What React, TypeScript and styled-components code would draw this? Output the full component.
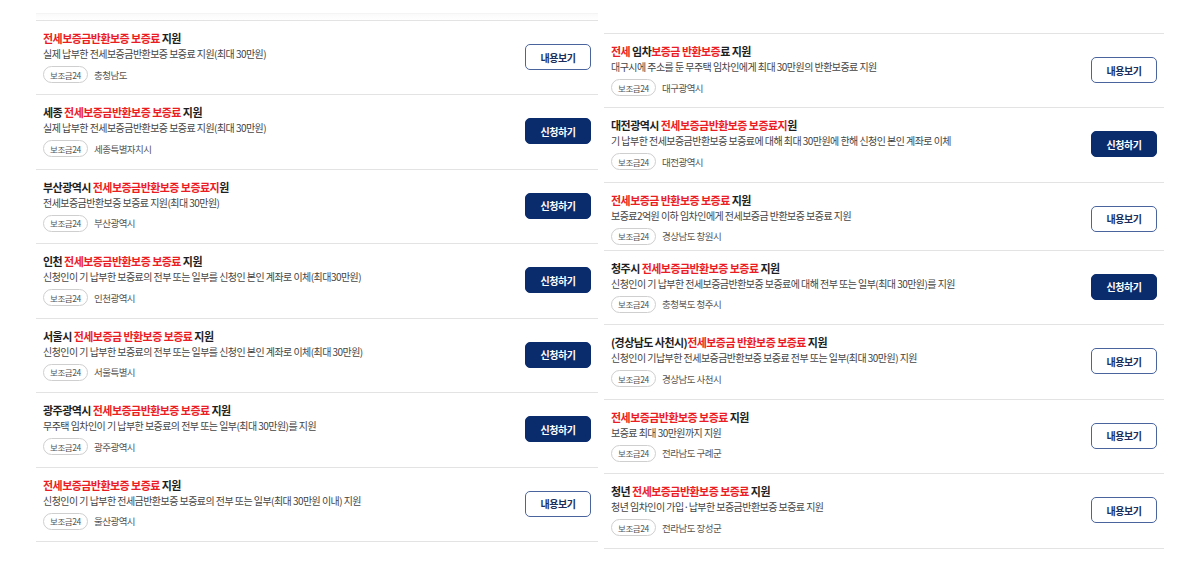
import React from "react";
import styled, { createGlobalStyle } from "styled-components";

const GlobalStyle = createGlobalStyle`
  html, body { margin: 0; padding: 0; background: #ffffff; }
  body { font-family: "Noto Sans CJK KR", "Noto Sans", sans-serif; color: #222; }
  * { box-sizing: border-box; }
`;

type Seg = { t: string; hl?: boolean };
type Item = {
  title: Seg[];
  desc: string;
  region: string;
  apply?: boolean;
  compact?: boolean;
};

const leftItems: Item[] = [
  { title: [{ t: "전세보증금반환보증 보증료", hl: true }, { t: " 지원" }], desc: "실제 납부한 전세보증금반환보증 보증료 지원(최대 30만원)", region: "충청남도" },
  { title: [{ t: "세종 " }, { t: "전세보증금반환보증 보증료", hl: true }, { t: " 지원" }], desc: "실제 납부한 전세보증금반환보증 보증료 지원(최대 30만원)", region: "세종특별자치시", apply: true },
  { title: [{ t: "부산광역시 " }, { t: "전세보증금반환보증 보증료지", hl: true }, { t: "원" }], desc: "전세보증금반환보증 보증료 지원(최대 30만원)", region: "부산광역시", apply: true },
  { title: [{ t: "인천 " }, { t: "전세보증금반환보증 보증료", hl: true }, { t: " 지원" }], desc: "신청인이 기 납부한 보증료의 전부 또는 일부를 신청인 본인 계좌로 이체(최대30만원)", region: "인천광역시", apply: true },
  { title: [{ t: "서울시 " }, { t: "전세보증금 반환보증 보증료", hl: true }, { t: " 지원" }], desc: "신청인이 기 납부한 보증료의 전부 또는 일부를 신청인 본인 계좌로 이체(최대 30만원)", region: "서울특별시", apply: true },
  { title: [{ t: "광주광역시 " }, { t: "전세보증금반환보증 보증료", hl: true }, { t: " 지원" }], desc: "무주택 임차인이 기 납부한 보증료의 전부 또는 일부(최대 30만원)를 지원", region: "광주광역시", apply: true },
  { title: [{ t: "전세보증금반환보증 보증료", hl: true }, { t: " 지원" }], desc: "신청인이 기 납부한 전세금반환보증 보증료의 전부 또는 일부(최대 30만원 이내) 지원", region: "울산광역시" },
];

const rightItems: Item[] = [
  { title: [{ t: "전세", hl: true }, { t: " 임차" }, { t: "보증금 반환보증", hl: true }, { t: "료 지원" }], desc: "대구시에 주소를 둔 무주택 임차인에게 최대 30만원의 반환보증료 지원", region: "대구광역시" },
  { title: [{ t: "대전광역시 " }, { t: "전세보증금반환보증 보증료지", hl: true }, { t: "원" }], desc: "기 납부한 전세보증금반환보증 보증료에 대해 최대 30만원에 한해 신청인 본인 계좌로 이체", region: "대전광역시", apply: true },
  { title: [{ t: "전세보증금 반환보증 보증료", hl: true }, { t: " 지원" }], desc: "보증료2억원 이하 임차인에게 전세보증금 반환보증 보증료 지원", region: "경상남도 창원시", compact: true },
  { title: [{ t: "청주시 " }, { t: "전세보증금반환보증 보증료", hl: true }, { t: " 지원" }], desc: "신청인이 기 납부한 전세보증금반환보증 보증료에 대해 전부 또는 일부(최대 30만원)를 지원", region: "충청북도 청주시", apply: true },
  { title: [{ t: "(경상남도 사천시)" }, { t: "전세보증금 반환보증 보증료", hl: true }, { t: " 지원" }], desc: "신청인이 기납부한 전세보증금반환보증 보증료 전부 또는 일부(최대 30만원) 지원", region: "경상남도 사천시" },
  { title: [{ t: "전세보증금반환보증 보증료", hl: true }, { t: " 지원" }], desc: "보증료 최대 30만원까지 지원", region: "전라남도 구례군" },
  { title: [{ t: "청년 " }, { t: "전세보증금반환보증 보증료", hl: true }, { t: " 지원" }], desc: "청년 임차인이 가입·납부한 보증금반환보증 보증료 지원", region: "전라남도 장성군" },
];

const Page = styled.div`
  display: flex;
  align-items: flex-start;
  gap: 6px;
  padding-left: 36px;
  width: 1177px;
`;

const Column = styled.section<{ $top: number; $width: number }>`
  width: ${(p) => p.$width}px;
  margin-top: ${(p) => p.$top}px;
  display: flex;
  flex-direction: column;
`;

const FaintRule = styled.div`
  height: 7px;
  margin-top: 13px;
  border-top: 1px solid #f4f4f4;
  background: linear-gradient(#fafafa, #ffffff);
`;

const Row = styled.article<{ $compact?: boolean }>`
  display: flex;
  align-items: center;
  justify-content: space-between;
  border-top: 1px solid #e3e3e3;
  padding: 10px 7px ${(p) => (p.$compact ? "5px" : "11.45px")} 7px;
  &:last-child { border-bottom: 1px solid #e3e3e3; }
`;

const Info = styled.div`
  display: flex;
  flex-direction: column;
`;

const Title = styled.h3`
  margin: 0;
  font-size: 11px;
  line-height: 14px;
  font-weight: 700;
  letter-spacing: -0.55px;
  color: #1e1e1e;
  white-space: nowrap;
`;

const Hl = styled.span`
  color: #ec1c24;
`;

const Desc = styled.p`
  margin: 2px 0 0;
  font-size: 10px;
  line-height: 14px;
  letter-spacing: -0.55px;
  color: #444;
  white-space: nowrap;
`;

const Meta = styled.div`
  display: flex;
  align-items: center;
  gap: 6px;
  margin-top: 5px;
`;

const Tag = styled.span`
  display: inline-flex;
  align-items: center;
  justify-content: center;
  height: 17px;
  padding: 0 6px;
  border: 1px solid #cfcfcf;
  border-radius: 9px;
  font-size: 8.5px;
  letter-spacing: -0.4px;
  color: #555;
`;

const Region = styled.span`
  font-size: 9.5px;
  letter-spacing: -0.5px;
  color: #555;
`;

const Button = styled.button<{ $filled?: boolean }>`
  flex: none;
  width: 66px;
  height: 26px;
  border-radius: 5px;
  border: 1px solid ${(p) => (p.$filled ? "#0b2c6c" : "#4a659e")};
  background: ${(p) => (p.$filled ? "#0b2c6c" : "#ffffff")};
  color: ${(p) => (p.$filled ? "#ffffff" : "#1b2f5e")};
  font-family: "Noto Sans CJK KR", sans-serif;
  font-size: 10px;
  font-weight: 700;
  letter-spacing: -0.5px;
  padding: 0;
  cursor: pointer;
`;

function ListRow({ item }: { item: Item }) {
  return (
    <Row $compact={item.compact}>
      <Info>
        <Title>
          {item.title.map((s, i) => (s.hl ? <Hl key={i}>{s.t}</Hl> : <React.Fragment key={i}>{s.t}</React.Fragment>))}
        </Title>
        <Desc>{item.desc}</Desc>
        <Meta>
          <Tag>보조금24</Tag>
          <Region>{item.region}</Region>
        </Meta>
      </Info>
      <Button $filled={item.apply}>{item.apply ? "신청하기" : "내용보기"}</Button>
    </Row>
  );
}

export default function App() {
  return (
    <>
      <GlobalStyle />
      <Page>
        <Column $top={0} $width={562}>
          <FaintRule />
          {leftItems.map((it, i) => (
            <ListRow key={i} item={it} />
          ))}
        </Column>
        <Column $top={33} $width={560}>
          {rightItems.map((it, i) => (
            <ListRow key={i} item={it} />
          ))}
        </Column>
      </Page>
    </>
  );
}
